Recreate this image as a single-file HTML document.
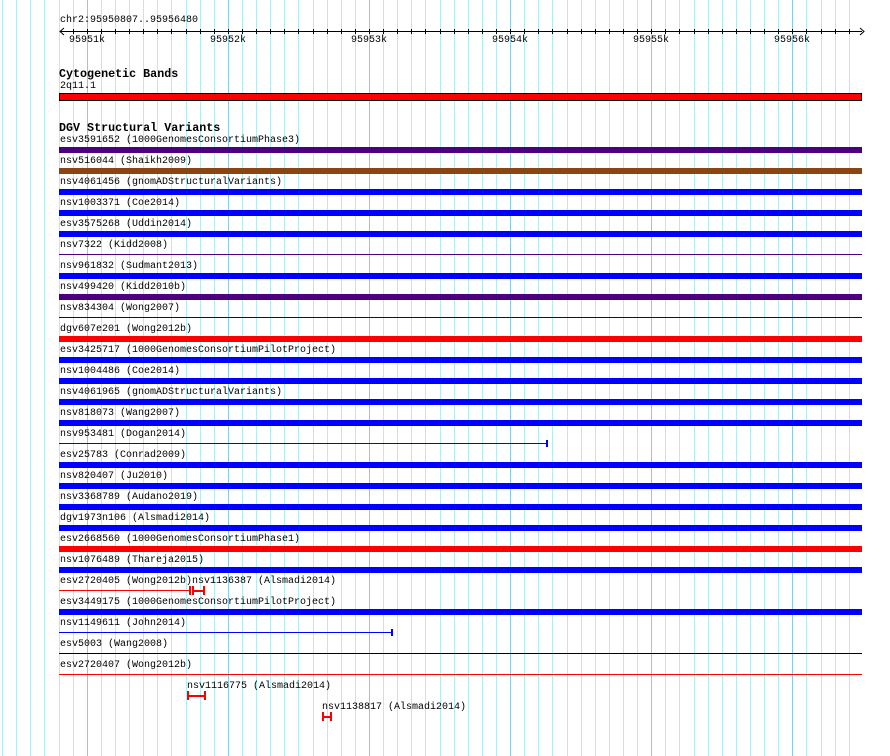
<!DOCTYPE html>
<html><head><meta charset="utf-8"><style>
body{margin:0;width:890px;height:756px;background:#fff;position:relative;overflow:hidden;font-family:"Liberation Mono","DejaVu Sans Mono",monospace;}
.g{position:absolute;top:0;height:756px;width:1px;background:#b4ecf0}
.G{position:absolute;top:0;height:756px;width:1px;background:#8ccbe8}
.t{position:absolute;top:29px;height:5px;width:1px;background:#000}
.l{position:absolute;left:60px;font-size:10px;line-height:12px;white-space:pre;color:#000;margin-top:1px}
.k{position:absolute;top:35px;font-size:10px;line-height:12px;width:60px;text-align:center}
.h{position:absolute;left:59px;font-size:11.7px;font-weight:bold;line-height:13px;margin-top:1px}
.b{position:absolute;left:59px;width:803px;height:6px}
.n{position:absolute;left:59px;height:1px}
.r{position:absolute}
</style></head><body>
<div class="g" style="left:2px"></div><div class="g" style="left:16px"></div><div class="g" style="left:30px"></div><div class="g" style="left:44px"></div><div class="g" style="left:59px"></div><div class="g" style="left:73px"></div>
<div class="G" style="left:87px"></div><div class="g" style="left:101px"></div><div class="g" style="left:115px"></div><div class="g" style="left:129px"></div><div class="g" style="left:143px"></div><div class="g" style="left:157px"></div><div class="g" style="left:171px"></div><div class="g" style="left:186px"></div><div class="g" style="left:200px"></div><div class="g" style="left:214px"></div>
<div class="G" style="left:228px"></div><div class="g" style="left:242px"></div><div class="g" style="left:256px"></div><div class="g" style="left:270px"></div><div class="g" style="left:284px"></div><div class="g" style="left:298px"></div><div class="g" style="left:313px"></div><div class="g" style="left:327px"></div><div class="g" style="left:341px"></div><div class="g" style="left:355px"></div>
<div class="G" style="left:369px"></div><div class="g" style="left:383px"></div><div class="g" style="left:397px"></div><div class="g" style="left:411px"></div><div class="g" style="left:425px"></div><div class="g" style="left:440px"></div><div class="g" style="left:454px"></div><div class="g" style="left:468px"></div><div class="g" style="left:482px"></div><div class="g" style="left:496px"></div>
<div class="G" style="left:510px"></div><div class="g" style="left:524px"></div><div class="g" style="left:538px"></div><div class="g" style="left:552px"></div><div class="g" style="left:567px"></div><div class="g" style="left:581px"></div><div class="g" style="left:595px"></div><div class="g" style="left:609px"></div><div class="g" style="left:623px"></div><div class="g" style="left:637px"></div>
<div class="G" style="left:651px"></div><div class="g" style="left:665px"></div><div class="g" style="left:679px"></div><div class="g" style="left:694px"></div><div class="g" style="left:708px"></div><div class="g" style="left:722px"></div><div class="g" style="left:736px"></div><div class="g" style="left:750px"></div><div class="g" style="left:764px"></div><div class="g" style="left:778px"></div>
<div class="G" style="left:792px"></div><div class="g" style="left:806px"></div><div class="g" style="left:821px"></div><div class="g" style="left:835px"></div><div class="g" style="left:849px"></div>

<div class="l" style="top:14px">chr2:95950807..95956480</div>
<div class="r" style="left:60px;top:31px;width:802px;height:1px;background:#000"></div>
<svg class="r" style="left:58px;top:26px" width="808" height="12"><path d="M6 2 L2 5.5 L6 9 M802 2 L806 5.5 L802 9" stroke="#000" fill="none"/></svg>
<div class="t" style="left:73px"></div><div class="t" style="left:87px"></div><div class="t" style="left:101px"></div><div class="t" style="left:115px"></div><div class="t" style="left:129px"></div><div class="t" style="left:143px"></div><div class="t" style="left:157px"></div><div class="t" style="left:171px"></div><div class="t" style="left:186px"></div><div class="t" style="left:200px"></div><div class="t" style="left:214px"></div><div class="t" style="left:228px"></div><div class="t" style="left:242px"></div><div class="t" style="left:256px"></div><div class="t" style="left:270px"></div><div class="t" style="left:284px"></div><div class="t" style="left:298px"></div><div class="t" style="left:313px"></div><div class="t" style="left:327px"></div><div class="t" style="left:341px"></div><div class="t" style="left:355px"></div><div class="t" style="left:369px"></div><div class="t" style="left:383px"></div><div class="t" style="left:397px"></div><div class="t" style="left:411px"></div><div class="t" style="left:425px"></div><div class="t" style="left:440px"></div><div class="t" style="left:454px"></div><div class="t" style="left:468px"></div><div class="t" style="left:482px"></div><div class="t" style="left:496px"></div><div class="t" style="left:510px"></div><div class="t" style="left:524px"></div><div class="t" style="left:538px"></div><div class="t" style="left:552px"></div><div class="t" style="left:567px"></div><div class="t" style="left:581px"></div><div class="t" style="left:595px"></div><div class="t" style="left:609px"></div><div class="t" style="left:623px"></div><div class="t" style="left:637px"></div><div class="t" style="left:651px"></div><div class="t" style="left:665px"></div><div class="t" style="left:679px"></div><div class="t" style="left:694px"></div><div class="t" style="left:708px"></div><div class="t" style="left:722px"></div><div class="t" style="left:736px"></div><div class="t" style="left:750px"></div><div class="t" style="left:764px"></div><div class="t" style="left:778px"></div><div class="t" style="left:792px"></div><div class="t" style="left:806px"></div><div class="t" style="left:821px"></div><div class="t" style="left:835px"></div><div class="t" style="left:849px"></div>
<div class="k" style="left:57px">95951k</div><div class="k" style="left:198px">95952k</div><div class="k" style="left:339px">95953k</div><div class="k" style="left:480px">95954k</div><div class="k" style="left:621px">95955k</div><div class="k" style="left:762px">95956k</div>

<div class="h" style="top:67px">Cytogenetic Bands</div>
<div class="l" style="top:80px">2q11.1</div>
<div class="r" style="left:59px;top:93px;width:801px;height:6px;background:#f00;border:1px solid #000"></div>

<div class="h" style="top:121px">DGV Structural Variants</div>

<div class="l" style="top:134px">esv3591652 (1000GenomesConsortiumPhase3)</div><div class="b" style="top:147px;background:#4b0082"></div>
<div class="l" style="top:155px">nsv516044 (Shaikh2009)</div><div class="b" style="top:168px;background:#8b4513"></div>
<div class="l" style="top:176px">nsv4061456 (gnomADStructuralVariants)</div><div class="b" style="top:189px;background:#00f"></div>
<div class="l" style="top:197px">nsv1003371 (Coe2014)</div><div class="b" style="top:210px;background:#00f"></div>
<div class="l" style="top:218px">esv3575268 (Uddin2014)</div><div class="b" style="top:231px;background:#00f"></div>
<div class="l" style="top:239px">nsv7322 (Kidd2008)</div><div class="n" style="top:254px;width:803px;background:#4b0082"></div>
<div class="l" style="top:260px">nsv961832 (Sudmant2013)</div><div class="b" style="top:273px;background:#00f"></div>
<div class="l" style="top:281px">nsv499420 (Kidd2010b)</div><div class="b" style="top:294px;background:#4b0082"></div>
<div class="l" style="top:302px">nsv834304 (Wong2007)</div><div class="n" style="top:317px;width:803px;background:#0000b0"></div>
<div class="l" style="top:323px">dgv607e201 (Wong2012b)</div><div class="b" style="top:336px;background:#f00"></div>
<div class="l" style="top:344px">esv3425717 (1000GenomesConsortiumPilotProject)</div><div class="b" style="top:357px;background:#00f"></div>
<div class="l" style="top:365px">nsv1004486 (Coe2014)</div><div class="b" style="top:378px;background:#00f"></div>
<div class="l" style="top:386px">nsv4061965 (gnomADStructuralVariants)</div><div class="b" style="top:399px;background:#00f"></div>
<div class="l" style="top:407px">nsv818073 (Wang2007)</div><div class="b" style="top:420px;background:#00f"></div>
<div class="l" style="top:428px">nsv953481 (Dogan2014)</div><div class="n" style="top:443px;width:488px;background:#00f"></div><div class="r" style="left:546px;top:440px;width:2px;height:7px;background:#00f"></div>
<div class="l" style="top:449px">esv25783 (Conrad2009)</div><div class="b" style="top:462px;background:#00f"></div>
<div class="l" style="top:470px">nsv820407 (Ju2010)</div><div class="b" style="top:483px;background:#00f"></div>
<div class="l" style="top:491px">nsv3368789 (Audano2019)</div><div class="b" style="top:504px;background:#00f"></div>
<div class="l" style="top:512px">dgv1973n106 (Alsmadi2014)</div><div class="b" style="top:525px;background:#00f"></div>
<div class="l" style="top:533px">esv2668560 (1000GenomesConsortiumPhase1)</div><div class="b" style="top:546px;background:#f00"></div>
<div class="l" style="top:554px">nsv1076489 (Thareja2015)</div><div class="b" style="top:567px;background:#00f"></div>
<div class="l" style="top:575px">esv2720405 (Wong2012b)nsv1136387 (Alsmadi2014)</div>
<div class="n" style="top:590px;width:131px;background:#f00"></div><div class="r" style="left:189px;top:586px;width:2px;height:9px;background:#f00"></div>
<div class="r" style="left:192px;top:590px;width:12px;height:2px;background:#f00"></div><div class="r" style="left:192px;top:586px;width:2px;height:9px;background:#f00"></div><div class="r" style="left:203px;top:586px;width:2px;height:9px;background:#f00"></div>
<div class="l" style="top:596px">esv3449175 (1000GenomesConsortiumPilotProject)</div><div class="b" style="top:609px;background:#00f"></div>
<div class="l" style="top:617px">nsv1149611 (John2014)</div><div class="n" style="top:632px;width:333px;background:#00f"></div><div class="r" style="left:391px;top:629px;width:2px;height:7px;background:#00f"></div>
<div class="l" style="top:638px">esv5003 (Wang2008)</div><div class="n" style="top:653px;width:803px;background:#000"></div>
<div class="l" style="top:659px">esv2720407 (Wong2012b)</div><div class="n" style="top:674px;width:803px;background:#f00"></div>
<div class="l" style="top:680px;left:187px">nsv1116775 (Alsmadi2014)</div>
<div class="r" style="left:187px;top:695px;width:18px;height:2px;background:#f00"></div><div class="r" style="left:187px;top:691px;width:2px;height:9px;background:#f00"></div><div class="r" style="left:204px;top:691px;width:2px;height:9px;background:#f00"></div>
<div class="l" style="top:701px;left:322px">nsv1138817 (Alsmadi2014)</div>
<div class="r" style="left:322px;top:716px;width:9px;height:2px;background:#f00"></div><div class="r" style="left:322px;top:712px;width:2px;height:9px;background:#f00"></div><div class="r" style="left:330px;top:712px;width:2px;height:9px;background:#f00"></div>
</body></html>
